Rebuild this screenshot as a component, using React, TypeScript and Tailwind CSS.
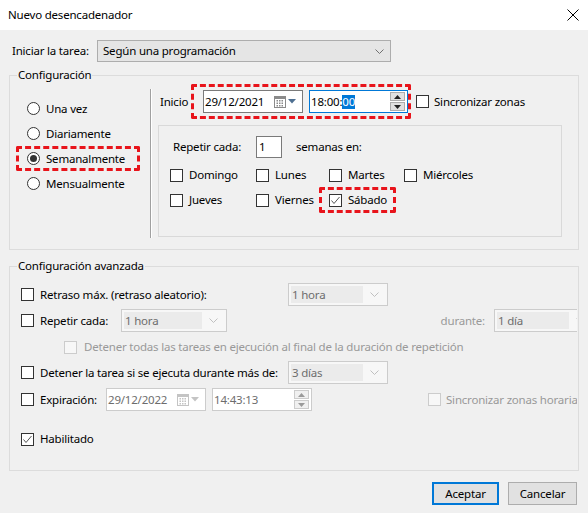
import React from 'react';

const fuente = "font-['Segoe_UI','Noto_Sans',sans-serif] tracking-[-0.2px]";

function Casilla({ marcada = false, deshabilitada = false }: { marcada?: boolean; deshabilitada?: boolean }) {
   return (
      <span
         className={`flex h-[13px] w-[13px] shrink-0 items-center justify-center border ${
            deshabilitada ? 'border-[#cccccc] bg-[#f7f7f7]' : 'border-[#333333] bg-white'
         }`}
      >
         {marcada && (
            <svg width="11" height="11" viewBox="0 0 11 11">
               <path d="M1.5 5.5 L4 8.5 L9.5 2" fill="none" stroke="#555555" strokeWidth="1" />
            </svg>
         )}
      </span>
   );
}

function Radio({ marcado = false }: { marcado?: boolean }) {
   return (
      <span className="flex h-[13px] w-[13px] shrink-0 items-center justify-center rounded-full border border-[#333333] bg-white">
         {marcado && <span className="h-[7px] w-[7px] rounded-full bg-[#333333]" />}
      </span>
   );
}

function Calendario({ gris = false }: { gris?: boolean }) {
   const c = gris ? '#c4c4c4' : '#8a8a8a';
   const t = gris ? '#c4c4c4' : '#4e6f91';
   return (
      <span className="flex shrink-0 items-center gap-[2px]">
         <svg width="12" height="12" viewBox="0 0 12 12">
            <rect x="0.5" y="0.5" width="11" height="11" fill="#ffffff" stroke={c} />
            <rect x="1" y="1" width="10" height="2" fill={c} />
            {[4, 6.5, 9].map((y) =>
               [2.5, 5, 7.5].map((x) => <rect key={`${x}-${y}`} x={x} y={y} width="1.5" height="1.5" fill={c} />)
            )}
         </svg>
         <svg width="8" height="5" viewBox="0 0 8 5">
            <path d="M0 0 L8 0 L4 4.5 Z" fill={t} />
         </svg>
      </span>
   );
}

function Giro({ gris = false }: { gris?: boolean }) {
   const f = gris ? '#9a9a9a' : '#222222';
   const cls = `flex flex-1 items-center justify-center border ${
      gris ? 'border-[#cccccc] bg-[#f0f0f0]' : 'border-[#adadad] bg-[#e1e1e1]'
   }`;
   return (
      <div className="ml-auto mr-[2px] flex h-[19px] w-[15px] shrink-0 flex-col gap-[1px]">
         <span className={cls}>
            <svg width="7" height="4" viewBox="0 0 7 4">
               <path d="M0 4 L3.5 0 L7 4 Z" fill={f} />
            </svg>
         </span>
         <span className={cls}>
            <svg width="7" height="4" viewBox="0 0 7 4">
               <path d="M0 0 L7 0 L3.5 4 Z" fill={f} />
            </svg>
         </span>
      </div>
   );
}

function Chevron({ color }: { color: string }) {
   return (
      <svg width="9" height="5" viewBox="0 0 9 5">
         <path d="M0.5 0.5 L4.5 4.5 L8.5 0.5" fill="none" stroke={color} strokeWidth="1" />
      </svg>
   );
}

function ComboGris({ texto, ancho }: { texto: string; ancho: string }) {
   return (
      <div className={`flex h-[23px] shrink-0 items-center border border-[#cccccc] bg-[#f7f7f7] p-[2px] ${ancho}`}>
         <span className="flex h-full flex-1 items-center bg-[#ebebeb] pl-[1px] text-[#6d6d6d]">{texto}</span>
         <span className="flex w-[22px] justify-center">
            <Chevron color="#c0c0c0" />
         </span>
      </div>
   );
}

function Grupo({ titulo, alto, children }: { titulo: string; alto: string; children: React.ReactNode }) {
   return (
      <div className={`relative mx-[9px] border border-[#dcdcdc] ${alto}`}>
         <span className="absolute left-[7px] top-[-9px] bg-[#f0f0f0] px-[1px] leading-[16px]">{titulo}</span>
         {children}
      </div>
   );
}

const dias: { nombre: string; ancho: string; marcado?: boolean }[][] = [
   [
      { nombre: 'Domingo', ancho: 'w-[86px]' },
      { nombre: 'Lunes', ancho: 'w-[73px]' },
      { nombre: 'Martes', ancho: 'w-[75px]' },
      { nombre: 'Miércoles', ancho: 'w-[100px]' },
   ],
   [
      { nombre: 'Jueves', ancho: 'w-[86px]' },
      { nombre: 'Viernes', ancho: 'w-[73px]' },
      { nombre: 'Sábado', ancho: 'w-[77px]', marcado: true },
   ],
];

export default function App() {
   const radios = ['Una vez', 'Diariamente', 'Semanalmente', 'Mensualmente'];

   return (
      <div className={`flex h-[513px] w-[588px] flex-col overflow-hidden whitespace-nowrap bg-[#f0f0f0] text-[11.5px] leading-[16px] text-black ${fuente}`}>
         {/* barra de título */}
         <div className="flex h-[30px] shrink-0 items-center justify-between bg-white pl-[8px] pr-[9px]">
            <span>Nuevo desencadenador</span>
            <svg width="12" height="12" viewBox="0 0 12 12">
               <path d="M0.5 0.5 L11.5 11.5 M11.5 0.5 L0.5 11.5" stroke="#000000" strokeWidth="1" />
            </svg>
         </div>

         {/* iniciar la tarea */}
         <div className="mt-[10px] flex h-[22px] items-center pl-[12px]">
            <span className="w-[85px] shrink-0">Iniciar la tarea:</span>
            <div className="flex h-[22px] w-[294px] shrink-0 items-center justify-between border border-[#adadad] bg-[#e5e5e5] pl-[5px] pr-[6px]">
               <span>Según una programación</span>
               <Chevron color="#707070" />
            </div>
         </div>

         <div className="mt-[13px]">
            <Grupo titulo="Configuración" alto="h-[175px]">
               <div className="flex h-full">
                  {/* radios */}
                  <div className="flex w-[140px] shrink-0 flex-col pl-[6px] pt-[20px]">
                     {radios.map((r) => (
                        <div
                           key={r}
                           className={`flex h-[25px] w-[124px] items-center gap-[6px] rounded-[2px] border-[3px] border-dashed pl-[8px] ${
                              r === 'Semanalmente' ? 'border-[#e8141b]' : 'border-transparent'
                           }`}
                        >
                           <Radio marcado={r === 'Semanalmente'} />
                           <span>{r}</span>
                        </div>
                     ))}
                  </div>
                  <div className="mt-[13px] h-[149px] w-[2px] shrink-0 border-l border-r border-l-[#a0a0a0] border-r-white" />

                  {/* derecha */}
                  <div className="flex flex-1 flex-col">
                     <div className="mt-[8px] flex h-[35px] items-center pl-[8px]">
                        <span className="w-[31px] shrink-0">Inicio</span>
                        <div className="flex h-[35px] w-[220px] shrink-0 items-center gap-[6px] rounded-[2px] border-[3px] border-dashed border-[#e8141b] pl-[9px]">
                           <div className="flex h-[23px] w-[100px] shrink-0 items-center border border-[#7a7a7a] bg-white pl-[1px] pr-[6px]">
                              <span className="flex-1">29/12/2021</span>
                              <Calendario />
                           </div>
                           <div className="flex h-[23px] w-[99px] shrink-0 items-center border border-[#0078d7] bg-white pl-[1px]">
                              <span>18:00:</span>
                              <span className="bg-[#0078d7] leading-[14px] text-white">00</span>
                              <Giro />
                           </div>
                        </div>
                        <span className="ml-[5px]">
                           <Casilla />
                        </span>
                        <span className="ml-[5px]">Sincronizar zonas</span>
                     </div>

                     <div className="ml-[6px] mt-[6px] h-[112px] w-[404px] border border-[#d9d9d9]">
                        <div className="mt-[10px] flex h-[22px] items-center pl-[14px]">
                           <span className="w-[83px] shrink-0">Repetir cada:</span>
                           <div className="flex h-[22px] w-[26px] shrink-0 items-center border border-[#7a7a7a] bg-white pl-[2px]">1</div>
                           <span className="ml-[14px]">semanas en:</span>
                        </div>
                        <div className="mt-[4px] flex flex-col pl-[1px]">
                           {dias.map((fila, i) => (
                              <div key={i} className={`flex ${i === 0 ? 'h-[25px]' : 'h-[26px]'}`}>
                                 {fila.map((d) => (
                                    <div
                                       key={d.nombre}
                                       className={`flex h-[26px] shrink-0 items-center gap-[6px] rounded-[2px] border-[3px] border-dashed pl-[7px] ${d.ancho} ${
                                          d.marcado ? 'border-[#e8141b]' : 'border-transparent'
                                       }`}
                                    >
                                       <Casilla marcada={d.marcado} />
                                       <span>{d.nombre}</span>
                                    </div>
                                 ))}
                              </div>
                           ))}
                        </div>
                     </div>
                  </div>
               </div>
            </Grupo>
         </div>

         <div className="mt-[16px]">
            <Grupo titulo="Configuración avanzada" alto="h-[205px]">
               <div className="flex flex-col pt-[16px]">
                  <div className="flex h-[23px] items-center pl-[11px]">
                     <div className="flex w-[267px] shrink-0 items-center gap-[6px]">
                        <Casilla />
                        <span>Retraso máx. (retraso aleatorio):</span>
                     </div>
                     <ComboGris texto="1 hora" ancho="w-[100px]" />
                  </div>

                  <div className="mt-[3px] flex h-[23px] w-[567px] items-center overflow-hidden pl-[11px]">
                     <div className="flex w-[100px] shrink-0 items-center gap-[6px]">
                        <Casilla />
                        <span>Repetir cada:</span>
                     </div>
                     <ComboGris texto="1 hora" ancho="w-[106px]" />
                     <span className="w-[258px] shrink-0 text-right text-[#999999]">durante:</span>
                     <span className="ml-[9px] shrink-0">
                        <ComboGris texto="1 día" ancho="w-[100px]" />
                     </span>
                  </div>

                  <div className="mt-[3px] flex h-[24px] items-center gap-[7px] pl-[54px] text-[#999999]">
                     <Casilla deshabilitada />
                     <span>Detener todas las tareas en ejecución al final de la duración de repetición</span>
                  </div>

                  <div className="mt-[2px] flex h-[23px] items-center pl-[11px]">
                     <div className="flex w-[267px] shrink-0 items-center gap-[6px]">
                        <Casilla />
                        <span>Detener la tarea si se ejecuta durante más de:</span>
                     </div>
                     <ComboGris texto="3 días" ancho="w-[100px]" />
                  </div>

                  <div className="mt-[4px] flex h-[23px] w-[567px] items-center overflow-hidden pl-[11px]">
                     <div className="flex w-[85px] shrink-0 items-center gap-[6px]">
                        <Casilla />
                        <span>Expiración:</span>
                     </div>
                     <div className="flex h-[23px] w-[100px] shrink-0 items-center border border-[#cccccc] bg-white pl-[1px] pr-[6px] text-[#6d6d6d]">
                        <span className="flex-1">29/12/2022</span>
                        <Calendario gris />
                     </div>
                     <div className="ml-[6px] flex h-[23px] w-[100px] shrink-0 items-center border border-[#cccccc] bg-white pl-[1px] text-[#6d6d6d]">
                        <span>14:43:13</span>
                        <Giro gris />
                     </div>
                     <span className="ml-[116px] shrink-0">
                        <Casilla deshabilitada />
                     </span>
                     <span className="ml-[5px] shrink-0 text-[#999999]">Sincronizar zonas horaria</span>
                  </div>

                  <div className="mt-[17px] flex h-[22px] items-center gap-[6px] pl-[11px]">
                     <Casilla marcada />
                     <span>Habilitado</span>
                  </div>
               </div>
            </Grupo>
         </div>

         {/* botones */}
         <div className="mt-[11px] flex justify-end gap-[9px] pr-[11px]">
            <button className="h-[23px] w-[67px] border-2 border-[#0078d7] bg-[#e1e1e1]">Aceptar</button>
            <button className="h-[23px] w-[69px] border border-[#adadad] bg-[#e1e1e1]">Cancelar</button>
         </div>
      </div>
   );
}
